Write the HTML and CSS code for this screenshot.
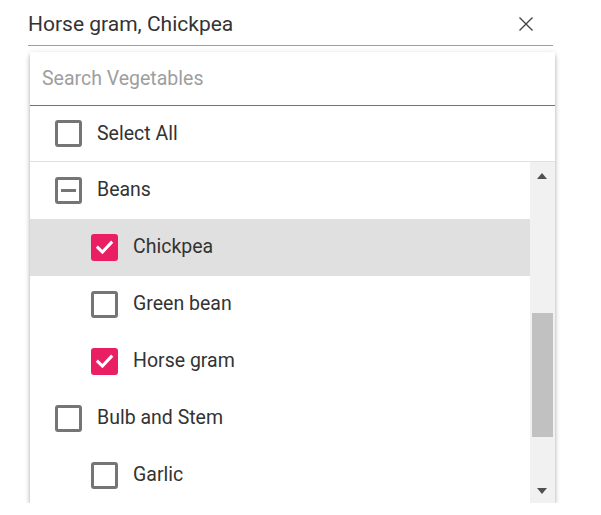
FILE: index.html
```html
<!DOCTYPE html>
<html lang="en">
<head>
<meta charset="utf-8">
<title>Vegetables</title>
<link rel="stylesheet" href="styles.css">
</head>
<body>
<div class="field">
  <span class="value">Horse gram, Chickpea</span>
  <svg class="clear" width="14" height="14" viewBox="0 0 14 14"><path d="M0.5 0.5L13.5 13.5M13.5 0.5L0.5 13.5" stroke="#444" stroke-width="1.4" fill="none"/></svg>
</div>
<div class="popup">
  <div class="search"><span class="placeholder">Search Vegetables</span></div>
  <div class="selectall">
    <span class="cb"></span><span class="label">Select All</span>
  </div>
  <div class="listwrap">
    <ul class="list">
      <li class="item"><span class="cb ind"><span class="dash"></span></span><span class="label">Beans</span></li>
      <li class="item child hover"><span class="cb on"><svg width="27" height="27" viewBox="0 0 27 27"><path d="M5.8 12.6L11.4 18L21.2 7.6" stroke="#fff" stroke-width="3" fill="none"/></svg></span><span class="label">Chickpea</span></li>
      <li class="item child"><span class="cb"></span><span class="label">Green bean</span></li>
      <li class="item child"><span class="cb on"><svg width="27" height="27" viewBox="0 0 27 27"><path d="M5.8 12.6L11.4 18L21.2 7.6" stroke="#fff" stroke-width="3" fill="none"/></svg></span><span class="label">Horse gram</span></li>
      <li class="item"><span class="cb"></span><span class="label">Bulb and Stem</span></li>
      <li class="item child"><span class="cb"></span><span class="label">Garlic</span></li>
    </ul>
    <div class="scrollbar">
      <span class="arrow up"></span>
      <span class="thumb"></span>
      <span class="arrow down"></span>
    </div>
  </div>
</div>
</body>
</html>
```
FILE: styles.css
```css
* { box-sizing: border-box; }
body {
  margin: 0;
  background: #fff;
  font-family: Roboto, "Liberation Sans", Arial, sans-serif;
  color: #333;
}
.field {
  margin-left: 28px;
  width: 525px;
  height: 46px;
  padding-top: 2px;
  border-bottom: 1px solid #9e9e9e;
  display: flex;
  align-items: center;
  justify-content: space-between;
  padding-right: 20px;
}
.value {
  font-size: 21px;
  color: #333;
}
.clear { display: block; }
.popup {
  margin-left: 30px;
  margin-top: 6px;
  width: 525px;
  background: #fff;
  box-shadow: 0 2px 4px -1px rgba(0,0,0,.2), 0 4px 5px 0 rgba(0,0,0,.14), 0 1px 6px 0 rgba(0,0,0,.12);
}
.search {
  height: 54px;
  border-bottom: 1px solid #757575;
  display: flex;
  align-items: center;
  padding-left: 12px;
}
.placeholder {
  font-size: 19.5px;
  color: #9e9e9e;
}
.selectall {
  height: 56px;
  border-bottom: 1px solid #e0e0e0;
  display: flex;
  align-items: center;
  padding-left: 25px;
  gap: 15px;
}
.label { font-size: 19.5px; color: #333; }
.cb {
  width: 27px;
  height: 27px;
  border: 3px solid #757575;
  border-radius: 3px;
  display: flex;
  align-items: center;
  justify-content: center;
  flex: none;
}
.cb.on {
  background: #e91e63;
  border: none;
}
.cb svg { display: block; }
.dash {
  width: 15px;
  height: 3px;
  background: #757575;
}
.listwrap {
  display: flex;
  height: 341px;
  overflow: hidden;
}
.list {
  list-style: none;
  margin: 0;
  padding: 0;
  flex: 1;
}
.item {
  height: 57px;
  display: flex;
  align-items: center;
  padding-left: 25px;
  gap: 15px;
}
.item .label { position: relative; top: -1px; }
.item.child { padding-left: 61px; }
.item.hover { background: #e0e0e0; }
.scrollbar {
  width: 25px;
  background: #f1f1f1;
  position: relative;
  flex: none;
}
.thumb {
  position: absolute;
  left: 2px;
  top: 151px;
  width: 21px;
  height: 124px;
  background: #c1c1c1;
}
.arrow {
  position: absolute;
  left: 7px;
  width: 0;
  height: 0;
  border-left: 5.5px solid transparent;
  border-right: 5.5px solid transparent;
}
.arrow.up { top: 11px; border-bottom: 6px solid #505050; }
.arrow.down { top: 326px; border-top: 6px solid #505050; }
```
